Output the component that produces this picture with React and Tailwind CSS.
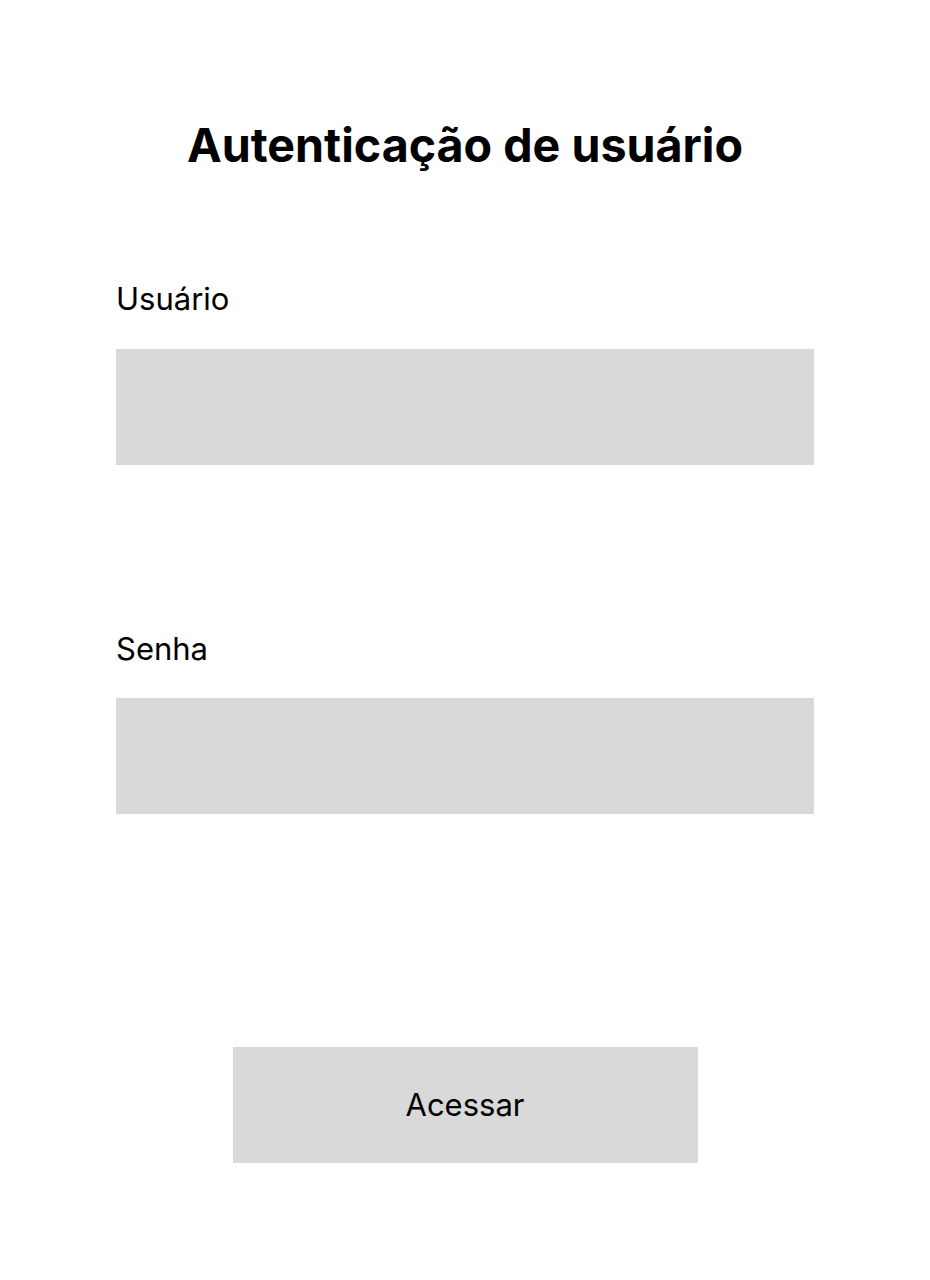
import React from 'react'

export default function App() {
  return (
    <div className="min-h-[1280px] w-[930px] bg-white text-black" style={{ fontFamily: 'Inter, "Noto Sans", sans-serif' }}>
      <div className="flex flex-col px-[116px] pt-[113px]">
        <h1 className="text-center text-[46.6px] font-bold leading-[64px]">Autenticação de usuário</h1>

        <label className="mt-[102px] text-[31px] leading-[40px]">Usuário</label>
        <div className="mt-[30px] h-[116px] w-[698px] bg-[#d9d9d9]" />

        <label className="mt-[164px] text-[31px] leading-[40px]">Senha</label>
        <div className="mt-[29px] h-[116px] w-[698px] bg-[#d9d9d9]" />

        <button className="mx-auto mt-[233px] flex h-[116px] w-[465px] items-center justify-center bg-[#d9d9d9] text-[31px]">
          Acessar
        </button>
      </div>
    </div>
  )
}
